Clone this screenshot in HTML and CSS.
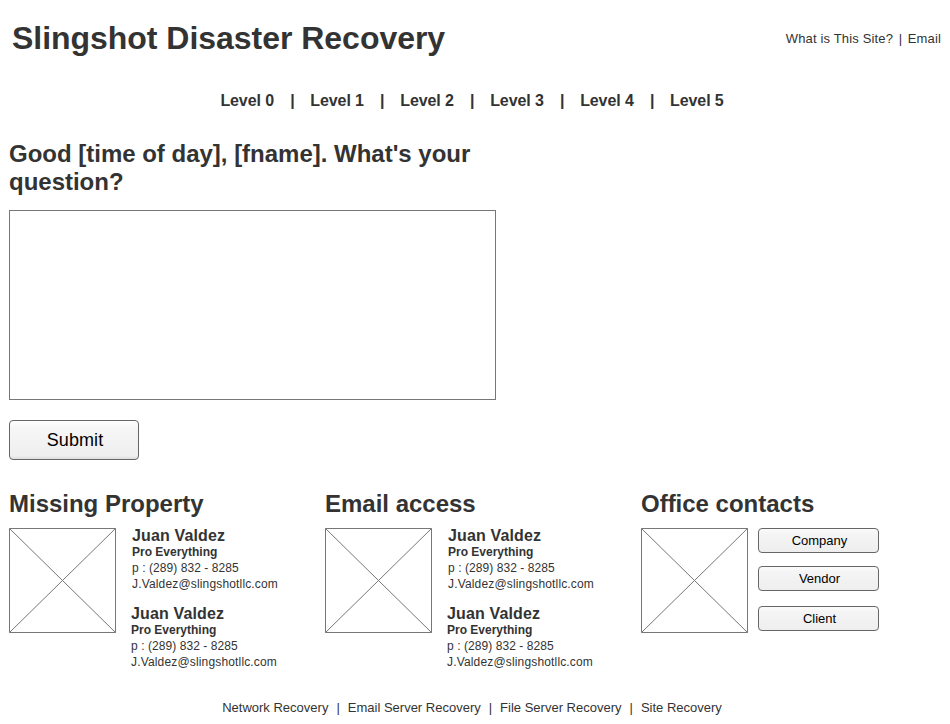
FILE: index.html
```html
<!DOCTYPE html>
<html lang="en">
<head>
<meta charset="utf-8">
<title>Slingshot Disaster Recovery</title>
<link rel="stylesheet" href="styles.css">
</head>
<body>
<header class="header">
  <h1>Slingshot Disaster Recovery</h1>
  <nav class="top-links"><a>What is This Site?</a><span>|</span><a>Email</a></nav>
</header>
<nav class="levels"><a>Level 0</a><i>|</i><a>Level 1</a><i>|</i><a>Level 2</a><i>|</i><a>Level 3</a><i>|</i><a>Level 4</a><i>|</i><a>Level 5</a></nav>
<main>
  <form class="ask">
    <h2>Good [time of day], [fname]. What's your question?</h2>
    <textarea class="question" aria-label="Question"></textarea>
    <button class="btn submit" type="button">Submit</button>
  </form>
  <div class="columns">
    <section>
      <h2>Missing Property</h2>
      <div class="panel">
        <svg class="photo" width="107" height="105" viewBox="0 0 107 105"><path d="M.5.5h106v104H.5zL106.5 104.5M106.5.5L.5 104.5"/></svg>
        <div class="people">
          <div class="person"><h3>Juan Valdez</h3><b>Pro Everything</b><p>p : (289) 832 - 8285</p><p class="mail">J.Valdez@slingshotllc.com</p></div>
          <div class="person"><h3>Juan Valdez</h3><b>Pro Everything</b><p>p : (289) 832 - 8285</p><p class="mail">J.Valdez@slingshotllc.com</p></div>
        </div>
      </div>
    </section>
    <section>
      <h2>Email access</h2>
      <div class="panel">
        <svg class="photo" width="107" height="105" viewBox="0 0 107 105"><path d="M.5.5h106v104H.5zL106.5 104.5M106.5.5L.5 104.5"/></svg>
        <div class="people">
          <div class="person"><h3>Juan Valdez</h3><b>Pro Everything</b><p>p : (289) 832 - 8285</p><p class="mail">J.Valdez@slingshotllc.com</p></div>
          <div class="person"><h3>Juan Valdez</h3><b>Pro Everything</b><p>p : (289) 832 - 8285</p><p class="mail">J.Valdez@slingshotllc.com</p></div>
        </div>
      </div>
    </section>
    <section>
      <h2>Office contacts</h2>
      <div class="panel">
        <svg class="photo" width="107" height="105" viewBox="0 0 107 105"><path d="M.5.5h106v104H.5zL106.5 104.5M106.5.5L.5 104.5"/></svg>
        <div class="actions">
          <button class="btn" type="button">Company</button>
          <button class="btn" type="button">Vendor</button>
          <button class="btn" type="button">Client</button>
        </div>
      </div>
    </section>
  </div>
</main>
<footer class="footer"><a>Network Recovery</a><span>|</span><a>Email Server Recovery</a><span>|</span><a>File Server Recovery</a><span>|</span><a>Site Recovery</a></footer>
</body>
</html>
```
FILE: styles.css
```css
* { box-sizing: border-box; }
body { margin: 0; width: 950px; height: 724px; overflow: hidden; background: #fff; color: #333; font-family: "Liberation Sans", Arial, sans-serif; font-size: 13px; }
h1, h2, h3, p { margin: 0; }
.header { display: flex; justify-content: space-between; align-items: center; height: 76px; padding: 0 9px 0 12px; }
h1 { font-size: 32px; line-height: 37px; letter-spacing: -.03px; }
.top-links { display: flex; gap: 5.5px; letter-spacing: .16px; }
.levels { display: flex; justify-content: center; gap: 17.2px; height: 50px; padding-right: 6px; align-items: center; font-size: 16px; font-weight: bold; letter-spacing: -.1px; }
.levels i { font-style: normal; width: 2px; margin-left: -1px; margin-right: 1px; }
main { padding: 14px 9px 0; }
h2 { font-size: 24px; line-height: 28px; letter-spacing: -.01px; }
.ask { width: 487px; }
.question { display: block; width: 487px; height: 190px; margin-top: 14px; border: 1px solid #777; background: #fff; resize: none; }
.btn { display: block; width: 121px; height: 25px; padding: 0 0 0 2px; border: 1px solid #666; border-radius: 4px; background: linear-gradient(#fbfbfb, #f5f5f5 20%, #eee); color: #000; font: 13px "Liberation Sans", Arial, sans-serif; }
.submit { width: 130px; height: 40px; margin-top: 20px; background: linear-gradient(#fff, #f7f7f7 15%, #eee 92%, #ddd); font-size: 18px; letter-spacing: .1px; }
.columns { display: grid; grid-template-columns: repeat(3, 316px); margin-top: 30px; }
.panel { display: flex; margin-top: 10px; }
.photo { display: block; fill: #fff; stroke: #777; stroke-width: 1; }
.people { margin: -1px 0 0 16px; font-size: 12px; line-height: 16px; }
.person b { display: block; }
.person p { letter-spacing: .07px; }
.person .mail { letter-spacing: .16px; }
.person h3 { font-size: 16px; line-height: 17px; letter-spacing: .15px; }
.person + .person { margin: 13px 0 0 -1px; }
.actions { margin-left: 10px; }
.actions .btn + .btn { margin-top: 13px; }
.actions .btn:last-child { margin-top: 15px; }
.footer { display: flex; justify-content: center; gap: 8px; margin-top: 30px; padding-right: 6px; line-height: 15px; }
```
